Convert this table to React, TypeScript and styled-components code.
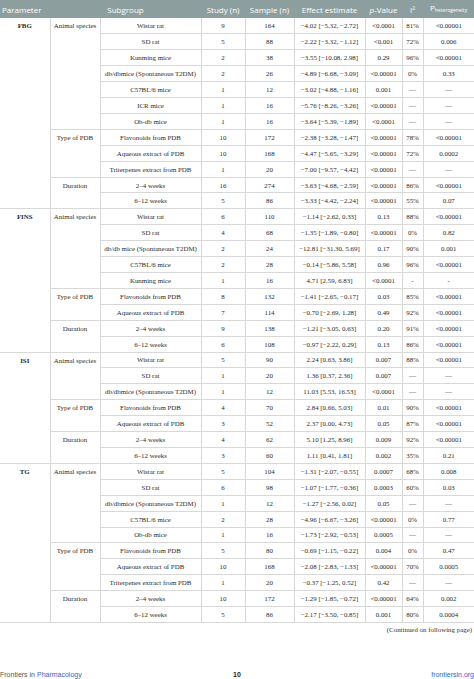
import React from "react";
import styled, { createGlobalStyle } from "styled-components";

const Global = createGlobalStyle`
  html, body { margin: 0; padding: 0; background: #ffffff; }
  body { width: 474px; overflow: hidden; }
`;

type Row = [string, string, string, string, string, string, string];
type Cat = { name: string; rows: Row[] };
type Group = { param: string; cats: Cat[] };

const M = "\u2212";
const D = "\u2014";

const groups: Group[] = [
  {
    param: "FBG",
    cats: [
      {
        name: "Animal species",
        rows: [
          ["Wistar rat", "9", "164", `${M}4.02 [${M}5.32, ${M}2.72]`, "<0.0001", "81%", "<0.00001"],
          ["SD rat", "5", "88", `${M}2.22 [${M}3.32, ${M}1.12]`, "<0.001", "72%", "0.006"],
          ["Kunming mice", "2", "38", `${M}3.55 [${M}10.08, 2.98]`, "0.29", "96%", "<0.00001"],
          ["db/dbmice (Spontaneous T2DM)", "2", "26", `${M}4.89 [${M}6.68, ${M}3.09]`, "<0.00001", "0%", "0.33"],
          ["C57BL/6 mice", "1", "12", `${M}3.02 [${M}4.88, ${M}1.16]`, "0.001", D, D],
          ["ICR mice", "1", "16", `${M}5.76 [${M}8.26, ${M}3.26]`, "<0.00001", D, D],
          ["Ob-db mice", "1", "16", `${M}3.64 [${M}5.39, ${M}1.89]`, "<0.0001", D, D],
        ],
      },
      {
        name: "Type of PDB",
        rows: [
          ["Flavonoids from PDB", "10", "172", `${M}2.38 [${M}3.28, ${M}1.47]`, "<0.00001", "78%", "<0.00001"],
          ["Aqueous extract of PDB", "10", "168", `${M}4.47 [${M}5.65, ${M}3.29]`, "<0.00001", "72%", "0.0002"],
          ["Triterpenes extract from PDB", "1", "20", `${M}7.00 [${M}9.57, ${M}4.42]`, "<0.00001", D, D],
        ],
      },
      {
        name: "Duration",
        rows: [
          ["2\u20134 weeks", "16", "274", `${M}3.63 [${M}4.68, ${M}2.59]`, "<0.00001", "86%", "<0.00001"],
          ["6\u201312 weeks", "5", "86", `${M}3.33 [${M}4.42, ${M}2.24]`, "<0.00001", "55%", "0.07"],
        ],
      },
    ],
  },
  {
    param: "FINS",
    cats: [
      {
        name: "Animal species",
        rows: [
          ["Wistar rat", "6", "110", `${M}1.14 [${M}2.62, 0.33]`, "0.13", "88%", "<0.00001"],
          ["SD rat", "4", "68", `${M}1.35 [${M}1.89, ${M}0.80]`, "<0.00001", "0%", "0.82"],
          ["db/db mice (Spontaneous T2DM)", "2", "24", `${M}12.81 [${M}31.30, 5.69]`, "0.17", "90%", "0.001"],
          ["C57BL/6 mice", "2", "28", `${M}0.14 [${M}5.86, 5.58]`, "0.96", "96%", "<0.00001"],
          ["Kunming mice", "1", "16", "4.71 [2.59, 6.83]", "<0.0001", "-", "-"],
        ],
      },
      {
        name: "Type of PDB",
        rows: [
          ["Flavonoids from PDB", "8", "132", `${M}1.41 [${M}2.65, ${M}0.17]`, "0.03", "85%", "<0.00001"],
          ["Aqueous extract of PDB", "7", "114", `${M}0.70 [${M}2.69, 1.28]`, "0.49", "92%", "<0.00001"],
        ],
      },
      {
        name: "Duration",
        rows: [
          ["2\u20134 weeks", "9", "138", `${M}1.21 [${M}3.05, 0.63]`, "0.20", "91%", "<0.00001"],
          ["6\u201312 weeks", "6", "108", `${M}0.97 [${M}2.22, 0.29]`, "0.13", "86%", "<0.00001"],
        ],
      },
    ],
  },
  {
    param: "ISI",
    cats: [
      {
        name: "Animal species",
        rows: [
          ["Wistar rat", "5", "90", "2.24 [0.63, 3.86]", "0.007", "88%", "<0.00001"],
          ["SD rat", "1", "20", "1.36 [0.37, 2.36]", "0.007", D, D],
          ["db/dbmice (Spontaneous T2DM)", "1", "12", "11.03 [5.53, 16.53]", "<0.0001", D, D],
        ],
      },
      {
        name: "Type of PDB",
        rows: [
          ["Flavonoids from PDB", "4", "70", "2.84 [0.66, 5.03]", "0.01", "90%", "<0.00001"],
          ["Aqueous extract of PDB", "3", "52", "2.37 [0.00, 4.73]", "0.05", "87%", "<0.00001"],
        ],
      },
      {
        name: "Duration",
        rows: [
          ["2\u20134 weeks", "4", "62", "5.10 [1.25, 8.96]", "0.009", "92%", "<0.00001"],
          ["6\u201312 weeks", "3", "60", "1.11 [0.41, 1.81]", "0.002", "35%", "0.21"],
        ],
      },
    ],
  },
  {
    param: "TG",
    cats: [
      {
        name: "Animal species",
        rows: [
          ["Wistar rat", "5", "104", `${M}1.31 [${M}2.07, ${M}0.55]`, "0.0007", "68%", "0.008"],
          ["SD rat", "6", "98", `${M}1.07 [${M}1.77, ${M}0.36]`, "0.0003", "60%", "0.03"],
          ["db/dbmice (Spontaneous T2DM)", "1", "12", `${M}1.27 [${M}2.56, 0.02]`, "0.05", D, D],
          ["C57BL/6 mice", "2", "28", `${M}4.96 [${M}6.67, ${M}3.26]`, "<0.00001", "0%", "0.77"],
          ["Ob-db mice", "1", "16", `${M}1.73 [${M}2.92, ${M}0.53]`, "0.0005", D, D],
        ],
      },
      {
        name: "Type of PDB",
        rows: [
          ["Flavonoids from PDB", "5", "80", `${M}0.69 [${M}1.15, ${M}0.22]`, "0.004", "0%", "0.47"],
          ["Aqueous extract of PDB", "10", "168", `${M}2.08 [${M}2.83, ${M}1.33]`, "<0.00001", "70%", "0.0005"],
          ["Triterpenes extract from PDB", "1", "20", `${M}0.37 [${M}1.25, 0.52]`, "0.42", D, D],
        ],
      },
      {
        name: "Duration",
        rows: [
          ["2\u20134 weeks", "10", "172", `${M}1.29 [${M}1.85, ${M}0.72]`, "<0.00001", "64%", "0.002"],
          ["6\u201312 weeks", "5", "86", `${M}2.17 [${M}3.50, ${M}0.85]`, "0.001", "80%", "0.0004"],
        ],
      },
    ],
  },
];

const widths = [50, 50, 101, 44, 49, 71, 37, 21, 51];

const Page = styled.div`
  width: 474px;
  height: 679px;
  display: flex;
  flex-direction: column;
`;

const Table = styled.table`
  width: 474px;
  table-layout: fixed;
  border-collapse: collapse;
  border-spacing: 0;
`;

const HeadRow = styled.tr`
  height: 15px;
  background: #8d9e9e;
`;

const Th = styled.th<{ $left?: boolean }>`
  padding: 0 ${(p) => (p.$left ? "2px" : "0")};
  text-align: ${(p) => (p.$left ? "left" : "center")};
  font-family: "Open Sans", "Liberation Sans", sans-serif;
  font-weight: 400;
  font-size: 8px;
  line-height: 15px;
  color: #ffffff;
  white-space: nowrap;
  overflow: hidden;
`;

const BodyRow = styled.tr`
  height: 15.92px;
`;

const Td = styled.td<{ $first?: boolean }>`
  padding: 0;
  text-align: center;
  vertical-align: middle;
  font-family: "Liberation Serif", "Times New Roman", serif;
  font-size: 6.9px;
  line-height: 9px;
  color: #2b2b2b;
  white-space: nowrap;
  border-bottom: 1px solid #d8d8d8;
  border-left: ${(p) => (p.$first ? "none" : "1px solid #d8d8d8")};
`;

const SpanCell = styled(Td)<{ $bold?: boolean }>`
  vertical-align: top;
  padding-top: 3px;
  font-weight: ${(p) => (p.$bold ? 700 : 400)};
`;

const Note = styled.div`
  margin-top: 2px;
  text-align: right;
  padding-right: 2px;
  font-family: "Liberation Serif", "Times New Roman", serif;
  font-size: 6.9px;
  line-height: 10px;
  color: #333333;
`;

const Footer = styled.div`
  margin-top: auto;
  display: grid;
  grid-template-columns: 1fr auto 1fr;
  align-items: center;
  height: 9px;
  font-family: "Liberation Sans", Arial, sans-serif;
  font-size: 7px;
  line-height: 9px;
`;

const Journal = styled.span`
  color: #555555;
`;

const Link = styled.span`
  color: #3a63b8;
`;

const PageNum = styled.span`
  color: #222222;
  font-weight: 700;
`;

const Site = styled.span`
  justify-self: end;
  color: #3a63b8;
`;

const Sub = styled.sub`
  font-size: 5px;
  vertical-align: -1px;
`;

const Sup = styled.sup`
  font-size: 5px;
  vertical-align: 3px;
`;

export default function App() {
  const body: React.ReactNode[] = [];
  groups.forEach((g) => {
    const total = g.cats.reduce((n, c) => n + c.rows.length, 0);
    g.cats.forEach((c, ci) => {
      c.rows.forEach((r, ri) => {
        body.push(
          <BodyRow key={`${g.param}-${ci}-${ri}`}>
            {ci === 0 && ri === 0 && (
              <SpanCell $first $bold rowSpan={total}>
                {g.param}
              </SpanCell>
            )}
            {ri === 0 && <SpanCell rowSpan={c.rows.length}>{c.name}</SpanCell>}
            {r.map((v, i) => (
              <Td key={i}>{v}</Td>
            ))}
          </BodyRow>
        );
      });
    });
  });

  return (
    <Page>
      <Global />
      <Table>
        <colgroup>
          {widths.map((w, i) => (
            <col key={i} style={{ width: w }} />
          ))}
        </colgroup>
        <thead>
          <HeadRow>
            <Th $left>Parameter</Th>
            <Th colSpan={2}>Subgroup</Th>
            <Th>Study (n)</Th>
            <Th>Sample (n)</Th>
            <Th>Effect estimate</Th>
            <Th>
              <i>p</i>-Value
            </Th>
            <Th>
              I<Sup>2</Sup>
            </Th>
            <Th>
              P<Sub>heterogeneity</Sub>
            </Th>
          </HeadRow>
        </thead>
        <tbody>{body}</tbody>
      </Table>
      <Note>(Continued on following page)</Note>
      <Footer>
        <span>
          <Journal>Frontiers in </Journal>
          <Link>Pharmacology</Link>
        </span>
        <PageNum>10</PageNum>
        <Site>frontiersin.org</Site>
      </Footer>
    </Page>
  );
}
